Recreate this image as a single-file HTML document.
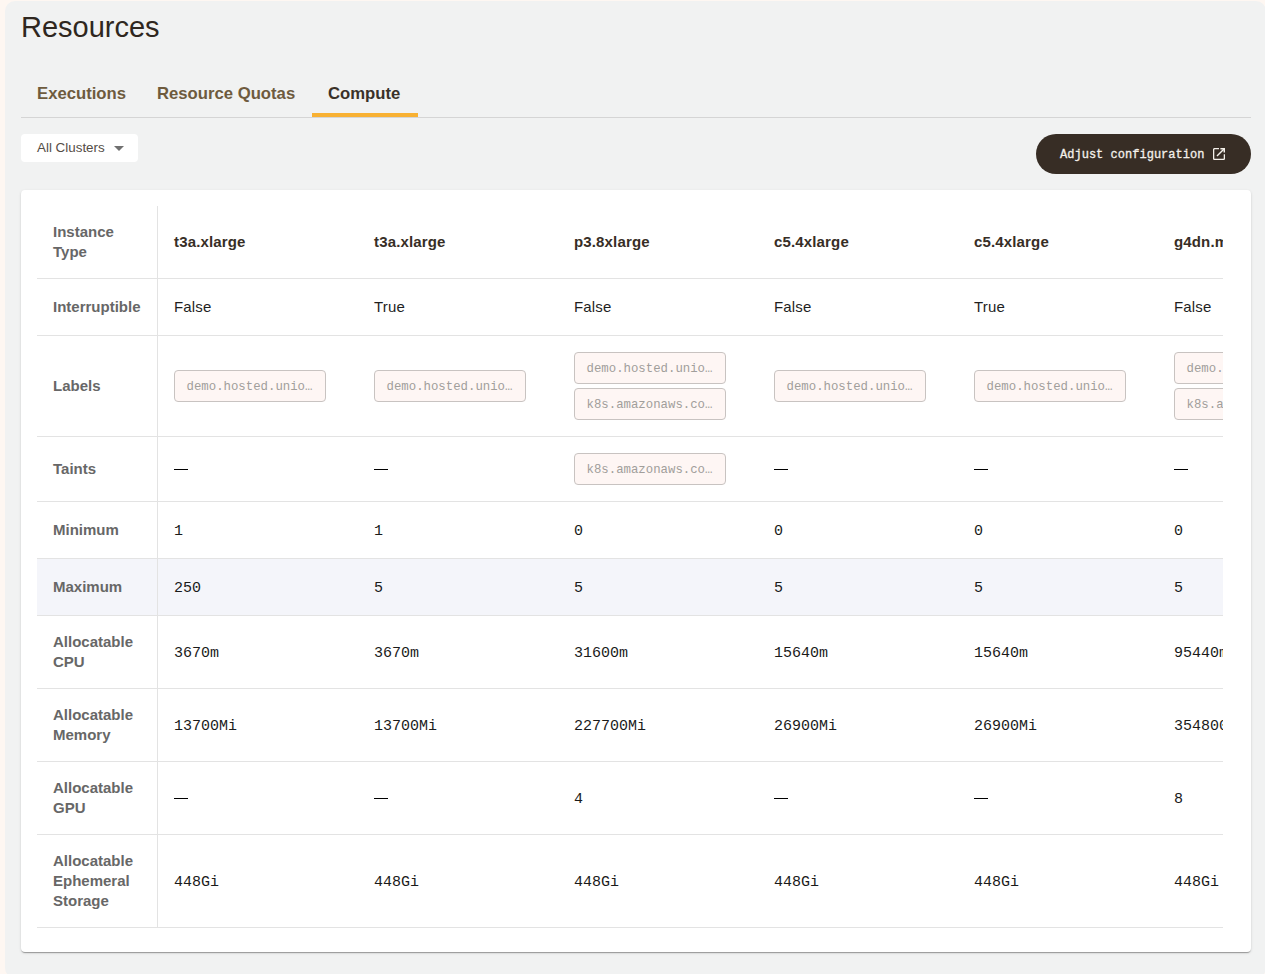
<!DOCTYPE html>
<html><head><meta charset="utf-8">
<style>
*{box-sizing:border-box;margin:0;padding:0}
html,body{width:1265px;height:974px;overflow:hidden;background:#fef7f2;font-family:"Liberation Sans",sans-serif}
.panel{position:absolute;left:5px;top:1px;width:1261px;height:977px;background:#f1f2f2;border-radius:10px}
.title{position:absolute;left:21px;top:9px;font-size:29px;line-height:36px;color:#2f2720;font-weight:400}
.tabs{position:absolute;left:21px;top:70px;width:1230px;height:48px;border-bottom:1px solid #d5d5d5}
.tab{position:absolute;top:0;height:47px;font-size:16.7px;font-weight:700;color:#6e5b3e;line-height:47px}
.tab.active{color:#3a3129}
.ink{position:absolute;left:291px;top:43px;width:106px;height:4px;background:#f8b133}
.dd{position:absolute;left:21px;top:134px;width:117px;height:28px;background:#fff;border-radius:4px;font-size:13.4px;color:#544c45;line-height:28px;padding-left:16px}
.caret{position:absolute;left:93px;top:12px;width:0;height:0;border-left:5px solid transparent;border-right:5px solid transparent;border-top:5px solid #707070}
.btn{position:absolute;left:1036px;top:134px;width:215px;height:40px;border-radius:20px;background:#372d25;color:#f4f0ea;font-family:"Liberation Mono",monospace;font-weight:400;font-size:12px;line-height:43px;padding-left:24px;letter-spacing:0.02px;-webkit-text-stroke:0.3px #f4f0ea}
.btn svg{position:absolute;left:177px;top:14px}
.card{position:absolute;left:21px;top:190px;width:1230px;height:762px;background:#fff;border-radius:4px;box-shadow:0 2px 1px -1px rgba(0,0,0,.2),0 1px 1px 0 rgba(0,0,0,.14),0 1px 3px 0 rgba(0,0,0,.12)}
.wrap{position:absolute;left:16px;top:16px;width:1186px;height:722px;overflow:hidden}
table{border-collapse:separate;border-spacing:0;table-layout:fixed;width:1321px}
td{border-bottom:1px solid #e3e3e3;padding:16px;vertical-align:middle;font-size:15px;line-height:24px;color:#1f1f1f;height:0}
td.l{width:121px;border-right:1px solid #e3e3e3;font-weight:700;color:#676767;line-height:20px;white-space:normal}
td.v{width:200px;letter-spacing:0.15px}
tr.hi td{background:#f4f5fa}
.it{font-weight:700;color:#372e26;letter-spacing:0.2px}
td.m{font-family:"Liberation Mono",monospace;font-size:15px;color:#1a1a1a;letter-spacing:0;padding-top:18px;padding-bottom:14px}
.chip{display:block;width:152px;height:32px;border:1px solid #c8c3c1;border-radius:4px;background:#fef6f4;color:#a19e9b;font-family:"Liberation Mono",monospace;font-size:12.35px;line-height:33px;letter-spacing:0;padding:0 0 0 11.5px;white-space:nowrap;overflow:hidden}
.chip+.chip{margin-top:4px}
.dash{display:block;width:14px;height:1px;background:#000}
</style></head><body>
<div class="panel"></div>
<div class="title">Resources</div>
<div class="tabs">
  <div class="tab" style="left:16px">Executions</div>
  <div class="tab" style="left:136px">Resource Quotas</div>
  <div class="tab active" style="left:307px">Compute</div>
  <div class="ink"></div>
</div>
<div class="dd">All Clusters<span class="caret"></span></div>
<div class="btn">Adjust configuration<svg width="12" height="12" viewBox="0 0 12 12"><path d="M6 0.6H1.8Q0.6 0.6 0.6 1.8V10.2Q0.6 11.4 1.8 11.4H10.2Q11.4 11.4 11.4 10.2V6.2" fill="none" stroke="#f4f0ea" stroke-width="1.35"/><path d="M7.4 0.7H11.3V4.6" fill="none" stroke="#f4f0ea" stroke-width="1.5"/><path d="M11 1L4 8" fill="none" stroke="#f4f0ea" stroke-width="1.5"/></svg></div>
<div class="card">
<div class="wrap">
<table>
<tr style="height:73px"><td class="l">Instance Type</td><td class="v it">t3a.xlarge</td><td class="v it">t3a.xlarge</td><td class="v it">p3.8xlarge</td><td class="v it">c5.4xlarge</td><td class="v it">c5.4xlarge</td><td class="v it">g4dn.metal</td></tr>
<tr><td class="l">Interruptible</td><td class="v">False</td><td class="v">True</td><td class="v">False</td><td class="v">False</td><td class="v">True</td><td class="v">False</td></tr>
<tr><td class="l">Labels</td>
 <td class="v"><span class="chip">demo.hosted.unio…</span></td>
 <td class="v"><span class="chip">demo.hosted.unio…</span></td>
 <td class="v"><span class="chip">demo.hosted.unio…</span><span class="chip">k8s.amazonaws.co…</span></td>
 <td class="v"><span class="chip">demo.hosted.unio…</span></td>
 <td class="v"><span class="chip">demo.hosted.unio…</span></td>
 <td class="v"><span class="chip">demo.hosted.unio…</span><span class="chip">k8s.amazonaws.co…</span></td></tr>
<tr><td class="l">Taints</td><td class="v"><span class="dash"></span></td><td class="v"><span class="dash"></span></td><td class="v"><span class="chip">k8s.amazonaws.co…</span></td><td class="v"><span class="dash"></span></td><td class="v"><span class="dash"></span></td><td class="v"><span class="dash"></span></td></tr>
<tr><td class="l">Minimum</td><td class="v m">1</td><td class="v m">1</td><td class="v m">0</td><td class="v m">0</td><td class="v m">0</td><td class="v m">0</td></tr>
<tr class="hi"><td class="l">Maximum</td><td class="v m">250</td><td class="v m">5</td><td class="v m">5</td><td class="v m">5</td><td class="v m">5</td><td class="v m">5</td></tr>
<tr><td class="l">Allocatable CPU</td><td class="v m">3670m</td><td class="v m">3670m</td><td class="v m">31600m</td><td class="v m">15640m</td><td class="v m">15640m</td><td class="v m">95440m</td></tr>
<tr><td class="l">Allocatable Memory</td><td class="v m">13700Mi</td><td class="v m">13700Mi</td><td class="v m">227700Mi</td><td class="v m">26900Mi</td><td class="v m">26900Mi</td><td class="v m">354800Mi</td></tr>
<tr><td class="l">Allocatable GPU</td><td class="v"><span class="dash"></span></td><td class="v"><span class="dash"></span></td><td class="v m">4</td><td class="v"><span class="dash"></span></td><td class="v"><span class="dash"></span></td><td class="v m">8</td></tr>
<tr><td class="l">Allocatable Ephemeral Storage</td><td class="v m">448Gi</td><td class="v m">448Gi</td><td class="v m">448Gi</td><td class="v m">448Gi</td><td class="v m">448Gi</td><td class="v m">448Gi</td></tr>
</table>
</div>
</div>
</body></html>
